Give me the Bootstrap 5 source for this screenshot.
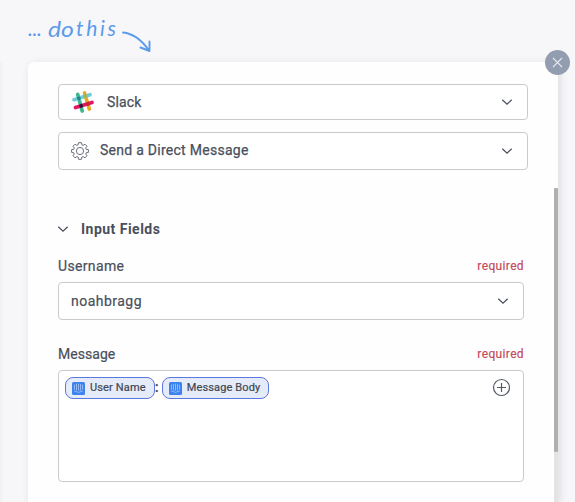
<!DOCTYPE html>
<html lang="en">
<head>
<meta charset="utf-8">
<meta name="viewport" content="width=device-width, initial-scale=1">
<title>Send a Direct Message</title>
<link href="https://cdn.jsdelivr.net/npm/bootstrap@5.3.0/dist/css/bootstrap.min.css" rel="stylesheet">
<style>
body{background:#f7f7fa;font-family:Roboto,"Noto Sans",sans-serif;font-size:14px;line-height:20px;color:#494f5c;height:502px;overflow:hidden}
svg{display:block;flex:none}
.heading-row{height:62px;padding:16px 0 0 28px}
.script-text{font-family:Lato,sans-serif;font-style:italic;font-size:21px}
.previous-edge{width:3px;height:440px;margin-right:25px;background:linear-gradient(90deg,#f1f1f4,#f6f6f9);border-top-right-radius:6px}
.step-panel{width:530px;height:440px;background:#fefefe;border-radius:6px 0 0 0;padding:22px 30px 0;box-shadow:2px 2px 8px rgba(40,40,60,.13)}
.select-box{border:1px solid #c9cacd;border-radius:4px;background:#fff;color:inherit;line-height:20px;padding:0 14px 0 12px;text-align:left}
.h-app{height:36px}
.h-field{height:38px}
.action-box{margin-top:12px}
.field-width{width:466px}
.t-slack{-webkit-text-stroke:.25px;margin-left:12px;letter-spacing:.15px}
.t-action{-webkit-text-stroke:.25px;letter-spacing:.27px;margin-left:11px;margin-top:-2px}
.t-field{-webkit-text-stroke:.2px;letter-spacing:.35px}
.t-message{-webkit-text-stroke:.2px;letter-spacing:.05px}
.username-box .t-field{margin-top:-1px;letter-spacing:.48px}
.section-head{margin-top:49px;font-size:14px;line-height:20px;gap:12px;margin-left:-1px}
.t-title{font-weight:700;letter-spacing:.48px}
.first-label{margin-top:17px}
.second-label{margin-top:24px}
.required-mark{font-size:12px;color:#c5475b;letter-spacing:.36px;-webkit-text-stroke:.15px}
.message-box{border:1px solid #c9cacd;border-radius:4px;height:112px;background:#fff;padding:6px 12px 0 6px;margin-top:6px}
.username-box{margin-top:6px}
.token{height:22px;border:1px solid #5b78dc;border-radius:8px;background:#e5ebf8;font-size:11px;line-height:20px;padding:0 8px 0 6px;color:#414753;gap:5px;letter-spacing:.14px;-webkit-text-stroke:.2px}
.token-gap{width:7px}
.close-btn{left:545px;top:50px;width:25px;height:25px;background:#929db0;border:0}
.scroll-track{right:0;top:0;width:4px;height:440px;padding-top:126px}
.scroll-thumb{height:264px;background:#b0b0b1;border-radius:1px}
.scroll-rest{height:50px;background:#e4e4e5}
</style>
<script src="https://cdn.jsdelivr.net/npm/bootstrap@5.3.0/dist/js/bootstrap.bundle.min.js"></script>
</head>
<body class="position-relative">
<svg width="0" height="0" class="position-absolute">
<symbol id="chevron" viewBox="0 0 12 8"><path d="M1.300 1.700 6 6.200l4.700-4.500" fill="none" stroke="#494f5c" stroke-width="1.250"/></symbol>
<symbol id="chat" viewBox="0 0 13 13"><rect width="13" height="13" rx="1.500" fill="#3d82ee"/><path d="M2.500 3v4.300M4.500 2.300v5.700M6.500 2.100v6.100M8.500 2.300v5.700M10.500 3v4.300M2.500 9.200q4 2.500 8 0" fill="none" stroke="#a5c7f8" stroke-width=".8" stroke-linecap="round"/></symbol>
</svg>
<header class="heading-row d-flex">
<svg width="124" height="38" viewBox="0 0 124 38" role="img" aria-label="... do this">
<g class="script-text" fill="#5c9be9"><text x="0" y="19.500" textLength="14">...</text><text x="20" y="21" textLength="26" lengthAdjust="spacingAndGlyphs">do</text><text x="48" y="19.500" textLength="40" lengthAdjust="spacing">this</text></g>
<path d="M95 16.500c10 1 18 6.500 26 18M112.500 31.500l9 3.500v-9.500" fill="none" stroke="#5c9be9" stroke-width="1.900" stroke-linecap="round" stroke-linejoin="round"/>
</svg>
</header>
<main class="d-flex">
<div class="previous-edge"></div>
<section class="step-panel position-relative">
<button class="select-box h-app w-100 d-flex align-items-center">
<svg width="24" height="24" viewBox="0 0 24 24" fill="none" stroke-linecap="round" stroke-width="3.700"><path d="m6.700 4.500 4.500 16.500" stroke="#3eb890"/><path d="m13.500 3 4.800 16" stroke="#e9a820"/><path d="m3 9.700 16-5" stroke="#70cadb"/><path d="m4.500 17.500 16.500-5" stroke="#e01765"/><path d="m7.800 8.200.1.200" stroke="#258878"/><path d="m14.300 6.200.1.200" stroke="#a0b448"/><path d="m10 15.800.1.200" stroke="#361238"/><path d="m16.800 13.800.1.200" stroke="#cb2730"/></svg>
<span class="t-slack me-auto">Slack</span><svg width="12" height="8"><use href="#chevron"/></svg>
</button>
<button class="select-box action-box h-field w-100 d-flex align-items-center">
<svg width="18" height="18" viewBox="0 0 18 18" fill="none" stroke="#6b707b" stroke-width="1"><path d="M7.500.700h3l.4 2.200 1.200.5L14 2.200 16 4.200l-1.300 1.800.5 1.300 2.200.3v2.800l-2.200.4-.5 1.200 1.300 1.800-2 2-1.900-1.200-1.200.5-.4 2.200h-3l-.4-2.200-1.200-.5L4 15.800 2 13.800 3.300 12l-.5-1.200-2.200-.4V7.600l2.200-.3.500-1.300L2 4.200l2-2 1.900 1.200 1.200-.5z"/><circle cx="9" cy="9" r="3.600"/></svg>
<span class="t-action me-auto">Send a Direct Message</span><svg width="12" height="8"><use href="#chevron"/></svg>
</button>
<h2 class="section-head d-flex align-items-center mb-0"><svg width="12" height="8"><use href="#chevron"/></svg><span class="t-title">Input Fields</span></h2>
<div class="field-width">
<div class="first-label d-flex justify-content-between align-items-center"><span class="t-field">Username</span><span class="required-mark">required</span></div>
<button class="select-box username-box h-field w-100 d-flex align-items-center justify-content-between"><span class="t-field">noahbragg</span><svg width="12" height="8"><use href="#chevron"/></svg></button>
<div class="second-label d-flex justify-content-between align-items-center"><span class="t-message">Message</span><span class="required-mark">required</span></div>
<div class="message-box d-flex align-items-start">
<span class="token d-flex align-items-center"><svg width="13" height="13"><use href="#chat"/></svg><span>User Name</span></span><span class="token-gap fw-bold">:</span><span class="token d-flex align-items-center"><svg width="13" height="13"><use href="#chat"/></svg><span>Message Body</span></span>
<svg class="ms-auto" width="20" height="20" viewBox="0 0 20 20" fill="none" stroke="#545966" stroke-width="1.200"><circle cx="10.500" cy="10.500" r="8"/><path d="M10.500 6v9M6 10.500h9"/></svg>
</div>
</div>
<div class="scroll-track position-absolute"><div class="scroll-thumb"></div><div class="scroll-rest"></div></div>
</section>
</main>
<button class="close-btn position-absolute rounded-circle p-0 d-flex align-items-center justify-content-center" aria-label="Close"><svg width="11" height="11" viewBox="0 0 11 11"><path d="m1 1 9 9m0-9-9 9" stroke="#e4e8ef" stroke-width="1.100"/></svg></button>
</body>
</html>
